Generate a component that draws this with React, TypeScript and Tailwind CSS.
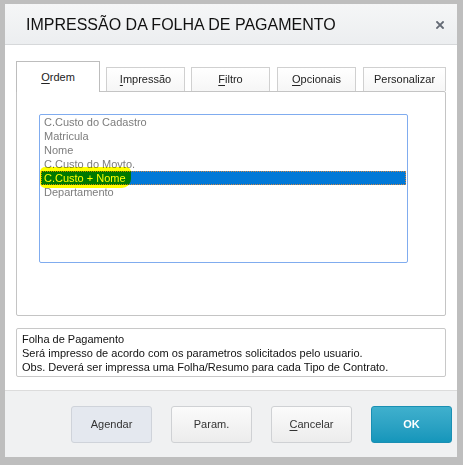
import React from "react";

const tabs = [
  { label: "Ordem", key: "O", rest: "rdem", active: true, w: "w-[84px]" },
  { label: "Impressão", key: "I", rest: "mpressão", w: "w-[79px]" },
  { label: "Filtro", key: "F", rest: "iltro", w: "w-[79px]" },
  { label: "Opcionais", key: "O", rest: "pcionais", w: "w-[79px]" },
  { label: "Personalizar", key: "", rest: "Personalizar", w: "w-[83px]" },
];

const orders = [
  "C.Custo do Cadastro",
  "Matricula",
  "Nome",
  "C.Custo do Movto.",
  "C.Custo + Nome",
  "Departamento",
];

function Button({
  children,
  variant = "default",
}: {
  children: React.ReactNode;
  variant?: "default" | "soft" | "primary";
}) {
  const styles = {
    default:
      "border-[#cfd1d4] bg-gradient-to-b from-[#fbfbfb] to-[#ececec] text-[#333]",
    soft: "border-[#cfd3da] bg-[#e4e8ef] text-[#333]",
    primary:
      "border-[#1a8fb3] bg-gradient-to-b from-[#3fb0cd] to-[#1496bb] text-white font-bold",
  }[variant];
  return (
    <button
      className={`h-[37px] w-[81px] rounded-[3px] border text-[11px] ${styles}`}
    >
      {children}
    </button>
  );
}

export default function App() {
  return (
    <div
      className="h-[465px] w-[463px] bg-[#bebebe] pb-[8px] pl-[5px] pr-[6px] pt-[4px]"
      style={{ fontFamily: '"Liberation Sans", Arial, sans-serif' }}
    >
      <div className="flex h-full flex-col bg-white">
        {/* title bar */}
        <div className="flex h-[41px] items-center justify-between border-b border-[#d6d8da] bg-gradient-to-b from-[#f5f6f7] to-[#eceef0] pl-[21px] pr-[13px]">
          <span className="pt-[2px] text-[16px] text-[#111]">
            IMPRESSÃO DA FOLHA DE PAGAMENTO
          </span>
          <svg width="8" height="8" viewBox="0 0 8 8" className="mt-[1px]">
            <path
              d="M1 1 L7 7 M7 1 L1 7"
              stroke="#646a75"
              strokeWidth="1.8"
              strokeLinecap="square"
            />
          </svg>
        </div>

        {/* body */}
        <div className="flex flex-1 flex-col px-[11px] pt-[16px]">
          <div className="flex items-end gap-[6px]">
            {tabs.map((t, i) => (
              <div
                key={t.label}
                className={`${t.w} ${
                  t.active
                    ? "relative z-10 -mb-px h-[31px] border border-b-0 border-[#bdbdbd] bg-white"
                    : "h-[24px] border border-b-0 border-[#d0d0d0] bg-gradient-to-b from-white to-[#f6f6f6]"
                } ${i >= 3 ? "ml-px" : ""} flex items-center justify-center text-[11px] text-[#222]`}
              >
                {t.key ? (
                  <span>
                    <span className="underline underline-offset-2">{t.key}</span>
                    {t.rest}
                  </span>
                ) : (
                  <span>{t.rest}</span>
                )}
              </div>
            ))}
          </div>

          {/* tab panel */}
          <div className="h-[225px] rounded-b-[2px] rounded-tr-[2px] border border-[#c4c4c4] pl-[22px] pt-[22px]">
            <div className="relative h-[149px] w-[369px] rounded-[2px] border border-[#80acef] bg-white px-px">
              {orders.map((o, i) =>
                i === 4 ? (
                  <div
                    key={o}
                    className="h-[14px] border border-dotted border-[#c9864a] bg-[#0078d7] pl-[2px] text-[11px] leading-[12px] text-white"
                  >
                    {o}
                  </div>
                ) : (
                  <div
                    key={o}
                    className="h-[14px] pl-[3px] text-[11px] leading-[14px] text-[#7d7d7d]"
                  >
                    {o}
                  </div>
                )
              )}
              {/* marker stroke over the selected entry */}
              <div className="pointer-events-none absolute left-0 top-[52px] h-[21px] w-[91px] rounded-[5px] rounded-br-[9px] bg-[#ffff00] mix-blend-multiply" />
            </div>
          </div>

          {/* description */}
          <div className="mt-[12px] h-[49px] rounded-[2px] border border-[#c8c8c8] pl-[5px] pt-[3px] text-[11px] leading-[14px] text-[#111]">
            <div>Folha de Pagamento</div>
            <div>Será impresso de acordo com os parametros solicitados pelo usuario.</div>
            <div>Obs. Deverá ser impressa uma Folha/Resumo para cada Tipo de Contrato.</div>
          </div>
        </div>

        {/* footer */}
        <div className="flex h-[67px] justify-end gap-[19px] border-t border-[#dcdcdc] bg-[#f0f1f2] pr-[5px] pt-[15px]">
          <Button variant="soft">Agendar</Button>
          <Button>Param.</Button>
          <Button>
            <span className="underline underline-offset-2">C</span>ancelar
          </Button>
          <Button variant="primary">OK</Button>
        </div>
      </div>
    </div>
  );
}
